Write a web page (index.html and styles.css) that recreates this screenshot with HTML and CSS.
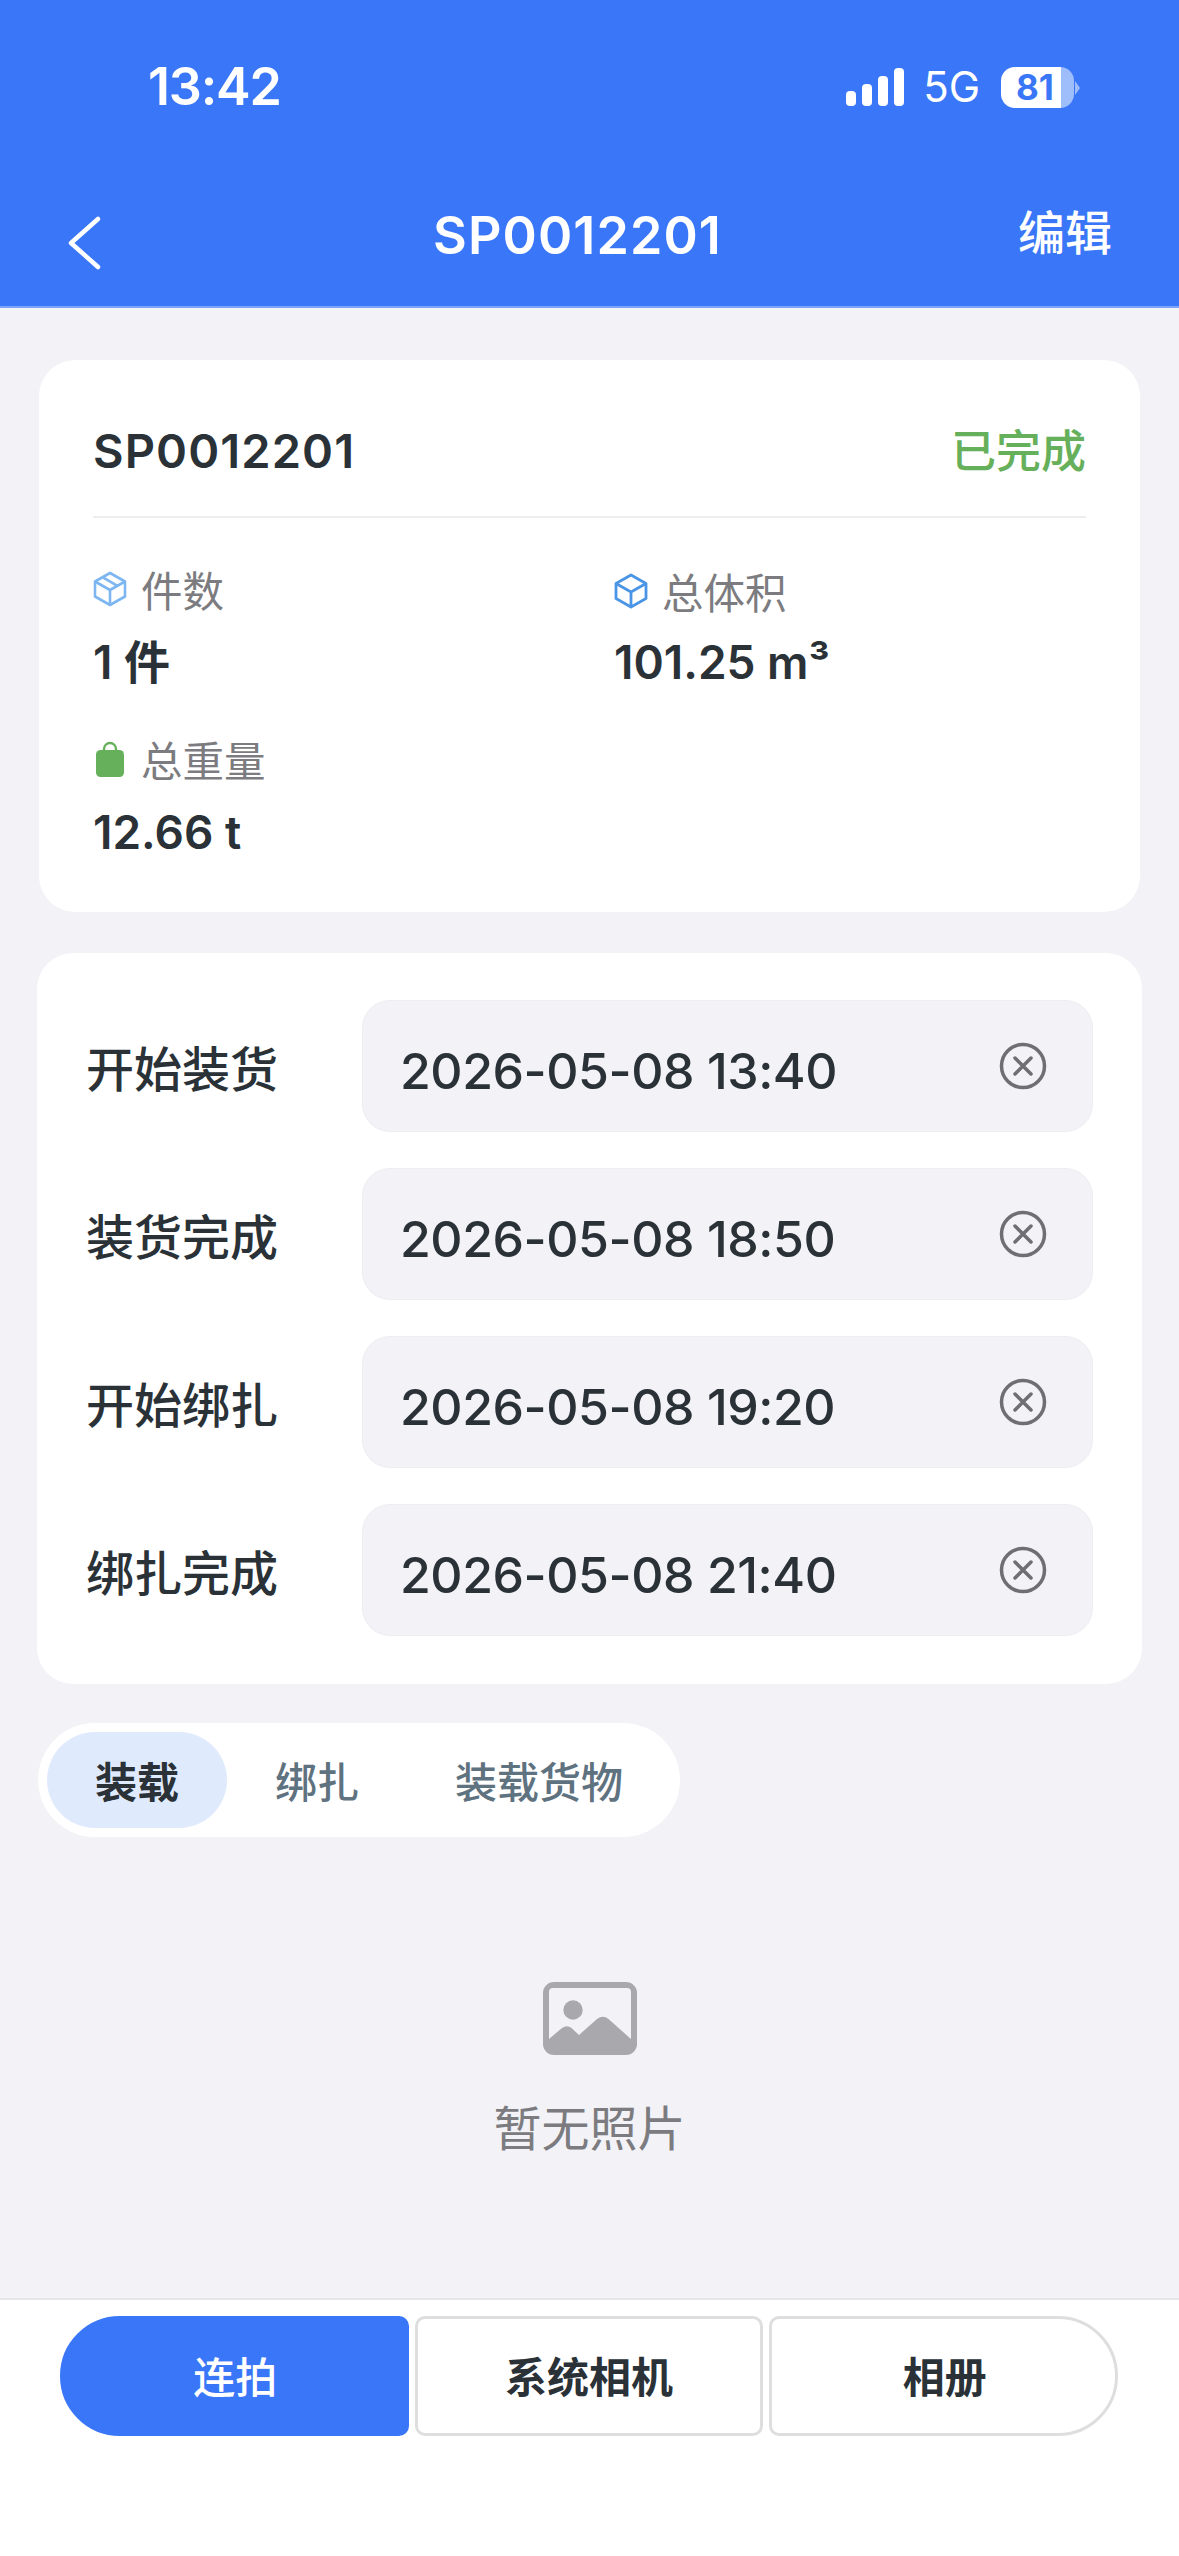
FILE: index.html
```html
<!DOCTYPE html>
<html lang="zh-CN">
<head>
  <meta charset="UTF-8">
  <title>SP0012201</title>
  <meta name="viewport" content="width=device-width, initial-scale=1.0">
  <link rel="stylesheet" href="styles.css">
</head>
<body>
  <div class="page">
    <header class="top">
      <div class="status-bar">
        <span class="time">13:42</span>
        <div class="status-right">
          <svg class="signal" width="58" height="38" viewBox="0 0 58 38">
            <rect x="0" y="23" width="10" height="15" rx="4" fill="#fff"/>
            <rect x="16" y="16" width="10" height="22" rx="4" fill="#fff"/>
            <rect x="32" y="8" width="10" height="30" rx="4" fill="#fff"/>
            <rect x="48" y="0" width="10" height="38" rx="4" fill="#fff"/>
          </svg>
          <span class="net">5G</span>
          <span class="battery">81</span>
        </div>
      </div>
      <nav class="nav">
        <svg class="back" width="34" height="56" viewBox="0 0 34 56">
          <path d="M31 4 L4 28 L31 52" fill="none" stroke="#fff" stroke-width="4.5" stroke-linecap="round" stroke-linejoin="round"/>
        </svg>
        <h1 class="nav-title">SP0012201</h1>
        <span class="nav-edit">编辑</span>
      </nav>
    </header>

    <main class="content">
      <section class="card summary">
        <div class="summary-head">
          <span class="order-no">SP0012201</span>
          <span class="order-state">已完成</span>
        </div>
        <div class="stats">
          <div class="stat">
            <div class="stat-label">
              <svg width="34" height="36" viewBox="0 0 34 36" fill="none" stroke="#7db6f0" stroke-width="2.6" stroke-linejoin="round">
                <path d="M17 2 L32 10.500 V25.500 L17 34 L2 25.500 V10.500 Z"/>
                <path d="M2 10.500 L17 19 L32 10.500 M17 19 V34 M9.500 6.200 L24.500 14.800"/>
              </svg>
              <span>件数</span>
            </div>
            <div class="stat-value">1 件</div>
          </div>
          <div class="stat">
            <div class="stat-label second">
              <svg width="34" height="36" viewBox="0 0 34 36" fill="none" stroke="#4b95e6" stroke-width="2.8" stroke-linejoin="round">
                <path d="M17 2 L32 10.500 V25.500 L17 34 L2 25.500 V10.500 Z"/>
                <path d="M2 10.500 L17 19 L32 10.500 M17 19 V34"/>
              </svg>
              <span>总体积</span>
            </div>
            <div class="stat-value">101.25 m³</div>
          </div>
          <div class="stat">
            <div class="stat-label">
              <svg width="34" height="36" viewBox="0 0 34 36">
                <path d="M11 11 V8 a6 6 0 0 1 12 0 V11" fill="none" stroke="#66b05c" stroke-width="2.4"/>
                <rect x="3" y="9" width="28" height="27" rx="4.500" fill="#66b05c"/>
              </svg>
              <span>总重量</span>
            </div>
            <div class="stat-value">12.66 t</div>
          </div>
        </div>
      </section>

      <section class="card times">
        <div class="time-row">
          <span class="time-label">开始装货</span>
          <div class="time-field">
            <span>2026-05-08 13:40</span>
            <svg class="clear" width="48" height="48" viewBox="0 0 48 48"><circle cx="24" cy="24" r="21.500" fill="none" stroke="#6e6e73" stroke-width="3.500"/><path d="M16 16 L32 32 M32 16 L16 32" stroke="#6e6e73" stroke-width="3.500" stroke-linecap="round"/></svg>
          </div>
        </div>
        <div class="time-row">
          <span class="time-label">装货完成</span>
          <div class="time-field">
            <span>2026-05-08 18:50</span>
            <svg class="clear" width="48" height="48" viewBox="0 0 48 48"><circle cx="24" cy="24" r="21.500" fill="none" stroke="#6e6e73" stroke-width="3.500"/><path d="M16 16 L32 32 M32 16 L16 32" stroke="#6e6e73" stroke-width="3.500" stroke-linecap="round"/></svg>
          </div>
        </div>
        <div class="time-row">
          <span class="time-label">开始绑扎</span>
          <div class="time-field">
            <span>2026-05-08 19:20</span>
            <svg class="clear" width="48" height="48" viewBox="0 0 48 48"><circle cx="24" cy="24" r="21.500" fill="none" stroke="#6e6e73" stroke-width="3.500"/><path d="M16 16 L32 32 M32 16 L16 32" stroke="#6e6e73" stroke-width="3.500" stroke-linecap="round"/></svg>
          </div>
        </div>
        <div class="time-row">
          <span class="time-label">绑扎完成</span>
          <div class="time-field">
            <span>2026-05-08 21:40</span>
            <svg class="clear" width="48" height="48" viewBox="0 0 48 48"><circle cx="24" cy="24" r="21.500" fill="none" stroke="#6e6e73" stroke-width="3.500"/><path d="M16 16 L32 32 M32 16 L16 32" stroke="#6e6e73" stroke-width="3.500" stroke-linecap="round"/></svg>
          </div>
        </div>
      </section>

      <div class="tabs">
        <span class="tab active">装载</span>
        <span class="tab">绑扎</span>
        <span class="tab">装载货物</span>
      </div>

      <div class="empty">
        <svg width="94" height="73" viewBox="0 0 94 73">
          <path fill-rule="evenodd" fill="#a8a8ad" d="M11 0 H83 a11 11 0 0 1 11 11 V62 a11 11 0 0 1 -11 11 H11 a11 11 0 0 1 -11 -11 V11 a11 11 0 0 1 11 -11 Z M10 6 a4 4 0 0 0 -4 4 V57 L19 46 q5 -3.500 9.500 0 L36 53 L54 37 q6 -4.500 11.500 0 L88 57 V10 a4 4 0 0 0 -4 -4 Z"/>
          <circle cx="30" cy="28" r="9.700" fill="#a8a8ad"/>
        </svg>
        <span class="empty-text">暂无照片</span>
      </div>
    </main>

    <footer class="actions">
      <button class="action primary" type="button">连拍</button>
      <button class="action" type="button">系统相机</button>
      <button class="action last" type="button">相册</button>
    </footer>
  </div>
</body>
</html>
```

FILE: styles.css
```css
* {
  box-sizing: border-box;
}

body {
  margin: 0;
  background: #f2f2f7;
  font-family: Inter, "Noto Sans CJK SC", sans-serif;
  color: #2a3238;
}

.page {
  display: flex;
  flex-direction: column;
  height: 2556px;
  overflow: hidden;
}

/* header */
.top {
  height: 308px;
  padding-top: 59px;
  background: #3a76f8;
  border-bottom: 2px solid #7aa5fa;
  color: #fff;
  flex-shrink: 0;
}

.status-bar {
  display: flex;
  justify-content: space-between;
  align-items: center;
  height: 56px;
  padding: 0 105px 0 148px;
}

.time {
  font-size: 52px;
  font-weight: 600;
  letter-spacing: -1.2px;
  line-height: 1;
}

.status-right {
  display: flex;
  align-items: center;
}

.signal {
  display: block;
}

.net {
  font-size: 42px;
  margin: 0 21px 0 19px;
  line-height: 1;
}

.battery {
  position: relative;
  display: block;
  width: 73px;
  height: 41px;
  padding-left: 15px;
  border-radius: 14px;
  background: linear-gradient(to right, #fff 60px, #9dbdfb 60px);
  color: #3a76f8;
  font-size: 35px;
  font-weight: 700;
  line-height: 41px;
}

.battery::after {
  content: "";
  position: absolute;
  right: -6px;
  top: 14px;
  border-left: 5px solid #9dbdfb;
  border-top: 7px solid transparent;
  border-bottom: 7px solid transparent;
}

.nav {
  display: grid;
  grid-template-columns: 366px auto 1fr;
  align-items: center;
  padding: 0 67px 0 67px;
  margin-top: 91px;
  height: 66px;
}

.back {
  display: block;
  margin-top: 8px;
}

.nav-title {
  margin: 0;
  font-size: 52px;
  font-weight: 600;
  letter-spacing: 1.1px;
  line-height: 1;
  margin-top: -6px;
}

.nav-edit {
  justify-self: end;
  font-size: 47px;
  font-weight: 500;
  line-height: 1;
  margin-top: -14px;
}

/* body */
.content {
  flex: 1;
  display: flex;
  flex-direction: column;
  padding: 52px 37px 0;
}

.card {
  background: #fff;
  border-radius: 36px;
}

.summary {
  margin: 0 2px;
  height: 552px;
  padding: 0 54px;
}

.summary-head {
  display: flex;
  justify-content: space-between;
  align-items: center;
  height: 158px;
  padding-top: 22px;
  border-bottom: 2px solid #eeeef0;
}

.order-no {
  font-size: 47px;
  font-weight: 600;
  letter-spacing: 1.1px;
  margin-top: 2px;
}

.order-state {
  color: #66b05c;
  font-size: 45px;
  font-weight: 500;
  margin-top: -2px;
}

.stats {
  display: grid;
  grid-template-columns: 521px 1fr;
  row-gap: 47px;
  padding-top: 46px;
}

.stat-label {
  display: flex;
  align-items: center;
  gap: 14px;
  height: 50px;
  color: #7c7c80;
  font-size: 41.500px;
}

.stat-label.second {
  margin-top: 2px;
  margin-bottom: -2px;
}

.stat-value {
  margin-top: 23px;
  font-size: 46px;
  font-weight: 600;
  line-height: 50px;
}

.times {
  height: 731px;
  margin-top: 41px;
  padding: 47px 49px 0 50px;
  display: flex;
  flex-direction: column;
  gap: 36px;
}

.time-row {
  display: flex;
  align-items: center;
}

.time-label {
  width: 275px;
  flex-shrink: 0;
  font-size: 48px;
  font-weight: 500;
  margin-left: -1px;
  margin-right: 1px;
}

.time-field {
  flex: 1;
  display: flex;
  align-items: center;
  justify-content: space-between;
  height: 132px;
  padding: 0 45px 0 37px;
  background: #f2f2f7;
  border: 1px solid #ededf2;
  border-radius: 28px;
  font-size: 50px;
  font-weight: 450;
  letter-spacing: -0.45px;
}

.clear {
  display: block;
  margin-top: -1px;
}

.time-field span {
  margin-top: 9px;
}

.tabs {
  display: flex;
  align-self: flex-start;
  margin: 39px 0 0 1px;
  padding: 9px;
  height: 114px;
  background: #fff;
  border-radius: 57px;
}

.tab {
  display: flex;
  align-items: center;
  padding: 0 48px 2px;
  font-size: 42px;
  font-weight: 500;
  color: #5f7280;
}

.tab.active {
  background: #dfeafd;
  border-radius: 48px;
  color: #2a3238;
  font-weight: 700;
}

.empty {
  display: flex;
  flex-direction: column;
  align-items: center;
  margin-top: 145px;
}

.empty-text {
  margin-top: 46px;
  color: #7c7c80;
  font-size: 48px;
  line-height: 56px;
}

/* bottom buttons */
.actions {
  display: flex;
  gap: 6px;
  height: 258px;
  padding: 16px 61px 0 60px;
  background: #fff;
  border-top: 2px solid #e5e5ea;
  flex-shrink: 0;
}

.action {
  flex: 1;
  height: 120px;
  padding: 0 0 3px;
  background: #fff;
  border: 3px solid #dedede;
  border-radius: 10px;
  color: #2a3238;
  font-family: inherit;
  font-size: 42px;
  font-weight: 700;
}

.action.primary {
  background: #3a76f8;
  border-color: #3a76f8;
  border-radius: 60px 10px 10px 60px;
  color: #fff;
  font-weight: 500;
  text-indent: 2px;
}

.action.last {
  text-indent: 2px;
  border-radius: 10px 60px 60px 10px;
}
```
